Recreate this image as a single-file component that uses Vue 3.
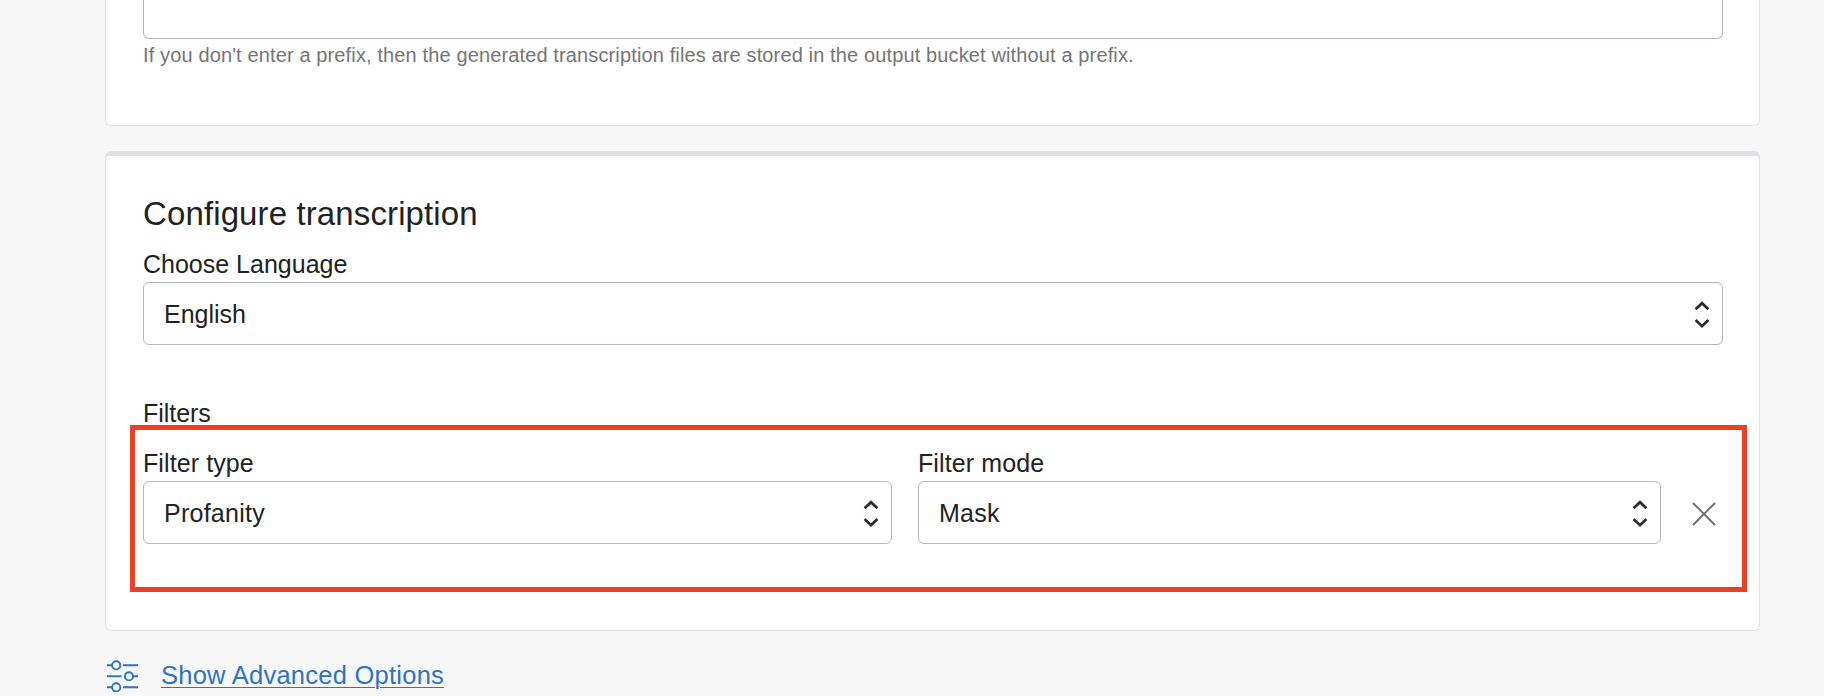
<script setup>
const language = 'English'
const filters = [
  { key: 'type', label: 'Filter type', value: 'Profanity' },
  { key: 'mode', label: 'Filter mode', value: 'Mask' },
]
</script>

<template>
  <main class="page">
    <section class="card card-prefix">
      <div class="prefix-input"></div>
      <p class="hint">If you don't enter a prefix, then the generated transcription files are stored in the output bucket without a prefix.</p>
    </section>

    <section class="card card-config">
      <h2 class="title">Configure transcription</h2>
      <label class="label lang-label">Choose Language</label>
      <div class="select lang">
        <span class="value english">{{ language }}</span>
        <svg class="chevrons" width="18" height="30" viewBox="0 0 18 30">
          <path d="M2.6 10.3L9 4.2L15.4 10.3M2.6 21.1L9 27.2L15.4 21.1" />
        </svg>
      </div>

      <div class="label filters-label">Filters</div>
      <div class="filter-box">
        <div v-for="f in filters" :key="f.key" class="field" :class="f.key">
          <label class="label">{{ f.label }}</label>
          <div class="select">
            <span class="value">{{ f.value }}</span>
            <svg class="chevrons" width="18" height="30" viewBox="0 0 18 30">
              <path d="M2.6 10.3L9 4.2L15.4 10.3M2.6 21.1L9 27.2L15.4 21.1" />
            </svg>
          </div>
        </div>
        <svg class="remove" width="24" height="24" viewBox="0 0 24 24">
          <path d="M1 1L23 23M23 1L1 23" />
        </svg>
      </div>
    </section>

    <div class="advanced">
      <svg class="sliders" width="32" height="32" viewBox="0 0 32 32">
        <path d="M0 5.3H5.2M16 5.3H31M0 16.3H14.5M26.5 16.3H31M0 27.3H5.2M16 27.3H31" />
        <circle cx="9.2" cy="5.3" r="4.1" />
        <circle cx="22" cy="16.3" r="4.1" />
        <circle cx="9.2" cy="27.3" r="4.1" />
      </svg>
      <a class="link">Show Advanced Options</a>
    </div>
  </main>
</template>

<style>
body {
  background: #f7f7f7;
  overflow: hidden;
}
</style>

<style scoped>
.page {
  box-sizing: border-box;
  width: 1824px;
  height: 696px;
  padding-left: 105px;
  overflow: hidden;
  background: #f7f7f7;
  color: #222;
  font-family: "Liberation Sans", Arial, sans-serif;
}
.card {
  box-sizing: border-box;
  width: 1655px;
  background: #fff;
  border: 1px solid #e0e0e3;
  border-radius: 6px;
}
.card-prefix {
  height: 126px;
  border-top: 0;
  border-radius: 0 0 6px 6px;
  padding: 0 36px 0 37px;
}
.prefix-input {
  box-sizing: border-box;
  height: 39px;
  border: 1px solid #b0b4bc;
  border-top: 0;
  border-radius: 0 0 6px 6px;
}
.hint {
  margin: 3px 0 0;
  font-size: 20px;
  line-height: 26px;
  letter-spacing: 0.13px;
  color: #757575;
  white-space: nowrap;
}
.card-config {
  height: 480px;
  margin-top: 25px;
  border-top: 5px solid #e0e1e5;
  padding: 38px 0 0 37px;
}
.title {
  margin: 0;
  font-size: 33px;
  font-weight: 400;
  line-height: 40px;
  letter-spacing: 0.12px;
}
.label {
  display: block;
  font-size: 25px;
  line-height: 32px;
  letter-spacing: 0.1px;
}
.lang-label {
  margin-top: 14px;
  letter-spacing: 0;
}
.select {
  box-sizing: border-box;
  display: flex;
  align-items: center;
  justify-content: space-between;
  height: 63px;
  padding: 0 11px 0 20px;
  border: 1px solid #b4b5be;
  border-radius: 6px;
  background: #fff;
}
.lang {
  width: 1580px;
  margin-top: 2px;
}
.value {
  font-size: 25px;
  line-height: 32px;
  letter-spacing: 0.25px;
}
.english {
  letter-spacing: 0;
}
.chevrons {
  fill: none;
  stroke: #2b2b2b;
  stroke-width: 2.7;
}
.filters-label {
  height: 12px;
  margin-top: 52px;
  letter-spacing: -0.05px;
}
.filter-box {
  box-sizing: border-box;
  display: flex;
  align-items: flex-start;
  width: 1617px;
  height: 167px;
  margin: 16px 0 0 -13px;
  padding: 17px 0 0 8px;
  border: 5px solid #ed4023;
}
.field.type {
  width: 749px;
  margin-right: 26px;
}
.field.mode {
  width: 743px;
}
.field .select {
  margin-top: 2px;
}
.remove {
  margin: 55px 0 0 31px;
  fill: none;
  stroke: #6b6b6b;
  stroke-width: 1.8;
}
.advanced {
  display: flex;
  align-items: center;
  margin: 27px 0 0 2px;
  height: 36px;
}
.sliders {
  fill: none;
  stroke: #2d73c8;
  stroke-width: 1.9;
}
.link {
  margin: 0 0 2px 22px;
  color: #2d73c8;
  font-size: 25.5px;
  line-height: 32px;
  letter-spacing: 0.25px;
  text-decoration: underline;
  text-decoration-thickness: 1px;
  text-underline-offset: 3px;
}
</style>
